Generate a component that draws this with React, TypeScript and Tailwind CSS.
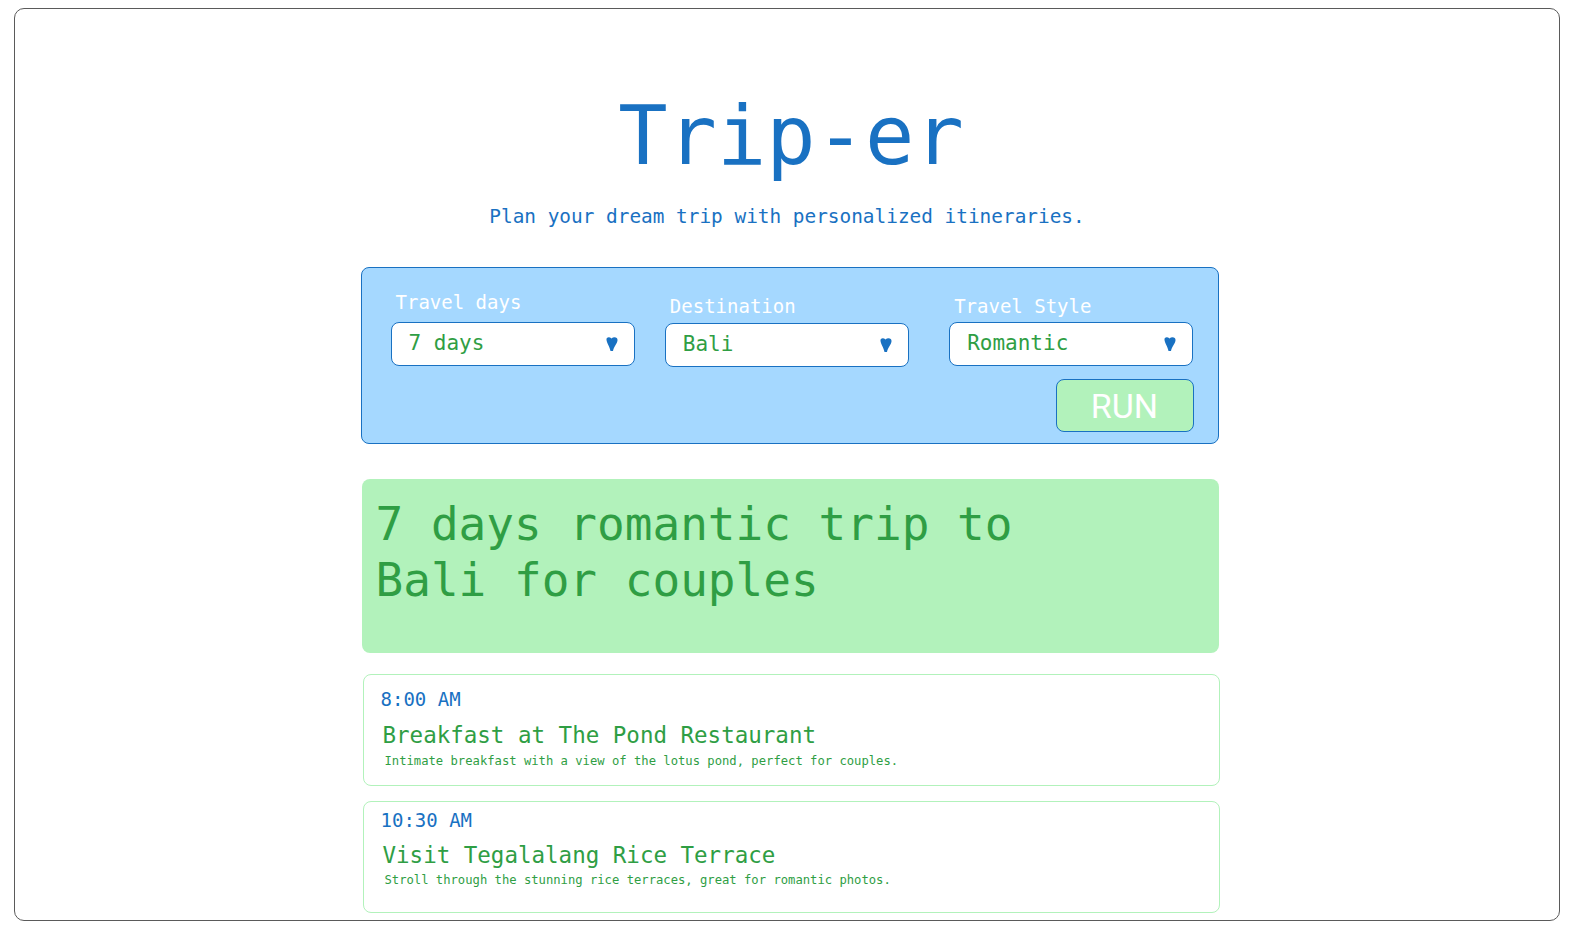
import React from "react";

const mono = { fontFamily: '"DejaVu Sans Mono", "Liberation Mono", monospace' };

const Arrow = () => (
  <svg width="14" height="16" viewBox="0 0 14 16" className="shrink-0">
    <path
      d="M1.5 4 C1 1 4.5 0.5 6.5 2.5 C8.5 0.5 13 1 12.5 4.5 C12 8 9 10 8 15 L5.5 15 C4.5 10 2 7.5 1.5 4 Z"
      fill="#1971c2"
    />
  </svg>
);

const Select = ({
  label,
  value,
  wrap,
  labelGap,
}: {
  label: string;
  value: string;
  wrap: string;
  labelGap: string;
}) => (
  <div className={wrap}>
    <div className={`text-[19px] leading-6 text-white pl-[5px] ${labelGap}`}>{label}</div>
    <div className="h-[44px] bg-white border border-[#1971c2] rounded-lg flex items-center justify-between pl-[17px] pr-[15px]">
      <span className="text-[21px] text-[#2f9e44]">{value}</span>
      <Arrow />
    </div>
  </div>
);

const items = [
  {
    time: "8:00 AM",
    title: "Breakfast at The Pond Restaurant",
    desc: "Intimate breakfast with a view of the lotus pond, perfect for couples.",
    pad: "pt-[12px]",
    titleGap: "mt-[10px]",
    descGap: "mt-[4px]",
  },
  {
    time: "10:30 AM",
    title: "Visit Tegalalang Rice Terrace",
    desc: "Stroll through the stunning rice terraces, great for romantic photos.",
    pad: "pt-[6px]",
    titleGap: "mt-[9px]",
    descGap: "mt-[3px]",
  },
];

const App = () => {
  return (
    <div className="w-full h-[934px] bg-white overflow-hidden pt-[8px] pl-[14px] pr-[17px]" style={mono}>
      <div className="h-[913px] border-[1.5px] border-[#5a5a5a] rounded-[10px] overflow-hidden flex flex-col items-center">
        <h1 className="mt-[86px] ml-[8px] text-[82px] leading-none text-[#1971c2]">Trip-er</h1>
        <p className="mt-[28px] text-[19.4px] leading-6 text-[#1971c2]">
          Plan your dream trip with personalized itineraries.
        </p>

        {/* Form panel */}
        <div className="mt-[38px] w-[858px] ml-[5px] bg-[#a5d8ff] border border-[#1971c2] rounded-lg pt-[22px] pb-[11px] pl-[29px] pr-[24px]">
          <div className="grid grid-cols-3 gap-x-[35px]">
            <Select label="Travel days" value="7 days" wrap="" labelGap="mb-2" />
            <Select label="Destination" value="Bali" wrap="mt-[4px] -ml-[5px] mr-[5px]" labelGap="mb-[5px]" />
            <Select label="Travel Style" value="Romantic" wrap="mt-[4px]" labelGap="mb-[4px]" />
          </div>
          <div className="flex justify-end mt-[12px]">
            <button
              className="w-[138px] h-[53px] bg-[#b2f2bb] border border-[#1971c2] rounded-lg text-white text-[34px] leading-none"
              style={{ fontFamily: 'Roboto, "Liberation Sans", sans-serif' }}
            >
              RUN
            </button>
          </div>
        </div>

        {/* Result heading */}
        <div className="mt-[35px] w-[857px] ml-[6px] h-[174px] bg-[#b2f2bb] rounded-lg pt-[17px] pl-[14px]">
          <h2 className="max-w-[680px] text-[46px] leading-[56px] text-[#2f9e44]">
            7 days romantic trip to Bali for couples
          </h2>
        </div>

        {/* Itinerary */}
        <div className="mt-[21px] w-[857px] ml-[8px] flex flex-col gap-[15px]">
          {items.map((it) => (
            <div
              key={it.time}
              className={`h-[112px] bg-white border-[1.5px] border-[#b2f2bb] rounded-lg pl-[17px] ${it.pad}`}
            >
              <div className="text-[19px] leading-6 text-[#1971c2]">{it.time}</div>
              <div className={`pl-[2px] text-[22.5px] leading-7 text-[#2f9e44] ${it.titleGap}`}>{it.title}</div>
              <div className={`pl-[4px] text-[12.2px] leading-4 text-[#2f9e44] ${it.descGap}`}>{it.desc}</div>
            </div>
          ))}
        </div>
      </div>
    </div>
  );
};

export default App;
